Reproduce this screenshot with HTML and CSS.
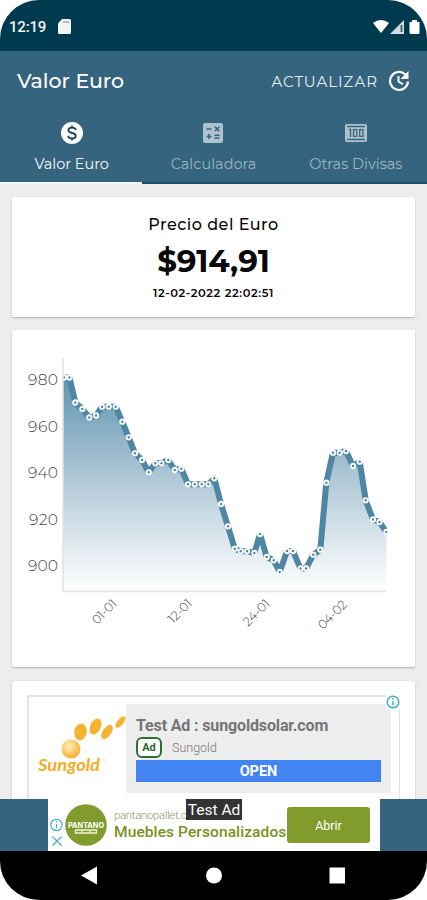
FILE: index.html
```html
<!DOCTYPE html>
<html lang="es">
<head>
    <meta charset="UTF-8">
    <meta name="viewport" content="width=device-width, initial-scale=1.0">
    <title>Valor Euro</title>
    <link rel="stylesheet" href="styles.css">
</head>
<body>
    <div class="phone">
        <!-- Barra de estado -->
        <div class="status-bar">
            <span class="clock">12:19</span>
            <svg class="sd-icon" width="13" height="15" viewBox="0 0 13 15"><path fill="#f3f4f6" d="M4 0h7.500q1.500 0 1.500 1.500v12q0 1.500-1.500 1.500h-10Q0 15 0 13.500V4.500z"/><path stroke="#6f8794" d="M5 3h6"/></svg>
            <svg class="signal-icons" width="48" height="16" viewBox="0 0 48 16">
                <path fill="#fff" d="M0 4Q8-2 16 4L8 14z"/>
                <path fill="#d5dce1" d="M17 15L31 1v14z"/>
                <path stroke="#51656f" stroke-width="2" d="M28.500 6v7"/>
                <path fill="#fff" d="M39 1h5v2h2.500v10.500q0 1.500-1.500 1.500h-7q-1.500 0-1.500-1.500V3H39z"/>
            </svg>
        </div>

        <header>
            <div class="toolbar">
                <h1>Valor Euro</h1>
                <a href="#" class="refresh">ACTUALIZAR</a>
                <svg width="22" height="22" viewBox="0 0 22 22" fill="none" stroke="#fff" stroke-width="2.200"><path d="M17.300 4.500A9 9 0 1 0 20 11.500"/><path d="M10.500 6v5.500l4.500 2.700" stroke-width="1.900"/><path fill="#fff" stroke="none" d="M20.500 1v8h-8z"/></svg>
            </div>
            <nav>
                <a href="#" class="tab active">
                    <svg width="22" height="22" viewBox="0 0 22 22"><circle cx="11" cy="11" r="11" fill="#fff"/><path fill="none" stroke="#20465e" stroke-width="1.800" d="M14.800 8Q14.500 5.700 11 5.700T7.400 8.300Q7.400 10.300 11 11t3.800 2.900q0 2.500-3.800 2.500T7.200 13.800M11 3.500v2.500M11 16v2.500"/></svg>
                    <span>Valor Euro</span>
                </a>
                <a href="#" class="tab">
                    <svg width="20" height="22" viewBox="0 -1 20 22"><rect width="20" height="20" rx="2" fill="#aec2ce"/><path fill="none" stroke="#35647e" stroke-width="1.600" d="M3.500 6h5M11.800 3.700l4.500 4.500M16.300 3.700l-4.500 4.500M3.500 13.500h5M6 11v5M11.500 12.300h5M11.500 15h5"/></svg>
                    <span>Calculadora</span>
                </a>
                <a href="#" class="tab">
                    <svg width="22" height="22" viewBox="0 -2 22 22"><rect width="22" height="18" rx="2" fill="#aec2ce"/><path fill="none" stroke="#35647e" stroke-width="1.300" d="M2 2.500h18M2 15.500h18M4 5.500h1.500V13M8.500 5.700h3.300v6.600H8.500zM14.700 5.700H18v6.600h-3.300z"/></svg>
                    <span>Otras Divisas</span>
                </a>
            </nav>
        </header>

        <main>
            <!-- Precio actual -->
            <section class="card price">
                <h2>Precio del Euro</h2>
                <p class="amount">$914,91</p>
                <p class="date">12-02-2022 22:02:51</p>
            </section>

            <!-- Gráfico del último mes -->
            <section class="card chart">
                <svg width="403" height="337" viewBox="12 330 403 337">
                    <defs>
                        <linearGradient id="fill" x1="0" y1="377" x2="0" y2="591" gradientUnits="userSpaceOnUse">
                            <stop offset="0" stop-color="#5f93b1"/>
                            <stop offset="0.500" stop-color="#b3cbd8"/>
                            <stop offset="1" stop-color="#ffffff"/>
                        </linearGradient>
                        <marker id="dot" markerUnits="userSpaceOnUse" markerWidth="8" markerHeight="8" refX="4" refY="4">
                            <circle cx="4" cy="4" r="2.200" fill="#4f86a4" stroke="#fff" stroke-width="1.900"/>
                        </marker>
                        <clipPath id="plot"><rect x="63" y="358" width="324" height="234"/></clipPath>
                    </defs>
                    <g clip-path="url(#plot)">
                        <path fill="url(#fill)" d="M63 591V377.500L69.500 377.500 75.300 402.500 82.300 409 89.300 417.500 96 415.500 102 406.700 115.700 406.700 122.300 421.700 128.700 437.300 135 453.300 142 460 148.700 472.300 155.300 463.300 161.500 463.300 168.300 460 174.700 470 181.300 468.700 188 484.300 208.300 484.300 214.300 478.300 221 504 228 526.300 234.700 548.700 240.700 551.300 247 551.300 254.300 553 260 534 266.700 557 273.700 560.300 279.700 572 287 551 293 551 300.500 568.500 306 568.500 313.300 554.700 320.300 549.700 326.300 482.700 333 452.700 339.700 452.700 346 451 353 466 359.700 461.700 365.700 500.300 373 519.500 379.500 522 386.300 532V591z"/>
                        <polyline class="line" points="64,377.500 69.500,377.500 75.300,402.500 82.300,409 89.300,417.500 96,415.500 102,406.700 108.700,406.700 115.700,406.700 122.300,421.700 128.700,437.300 135,453.300 142,460 148.700,472.300 155.300,463.300 161.500,463.300 168.300,460 174.700,470 181.300,468.700 188,484.300 194.700,484.300 201.700,484.300 208.300,484.300 214.300,478.300 221,504 228,526.300 234.700,548.700 240.700,551.300 247,551.300 254.300,553 260,534 266.700,557 273.700,560.300 279.700,572 287,551 293,551 300.500,568.500 306,568.500 313.300,554.700 320.300,549.700 326.300,482.700 333,452.700 339.700,452.700 346,451 353,466 359.700,461.700 365.700,500.300 373,519.500 379.500,522 386.300,532"/>
                    </g>
                    <path class="axis" d="M63 358V591.500H386"/>
                    <g class="y-labels">
                        <text x="28" y="385" textLength="30">980</text>
                        <text x="28" y="432" textLength="30">960</text>
                        <text x="28" y="478" textLength="30">940</text>
                        <text x="29" y="525" textLength="29">920</text>
                        <text x="28" y="571" textLength="30">900</text>
                    </g>
                    <g class="x-labels">
                        <text transform="translate(97 625) rotate(-45)" textLength="29">01-01</text>
                        <text transform="translate(173 624) rotate(-45)" textLength="28">12-01</text>
                        <text transform="translate(248 627) rotate(-45)" textLength="32">24-01</text>
                        <text transform="translate(323 630) rotate(-45)" textLength="35">04-02</text>
                    </g>
                </svg>
            </section>

            <!-- Anuncio nativo -->
            <section class="card native-ad">
                <div class="ad-frame">
                    <svg class="sungold" width="97" height="112" viewBox="29 697 97 112">
                        <defs>
                            <radialGradient id="sun" cx="0.400" cy="0.350" r="0.650">
                                <stop offset="0" stop-color="#fff0ba"/>
                                <stop offset="1" stop-color="#f5af32"/>
                            </radialGradient>
                        </defs>
                        <g fill="#f6b332">
                            <ellipse cx="80.500" cy="732" rx="6.200" ry="8.500" transform="rotate(10 80.500 732)"/>
                            <ellipse cx="95.500" cy="726.500" rx="5.200" ry="8.500" transform="rotate(25 95.500 726.500)"/>
                            <ellipse cx="107" cy="732" rx="4.200" ry="8.200" transform="rotate(35 107 732)"/>
                            <ellipse cx="120.500" cy="722" rx="3" ry="7" transform="rotate(40 120.500 722)"/>
                        </g>
                        <circle cx="71" cy="749" r="9.500" fill="url(#sun)"/>
                        <text class="sungold-name" x="38" y="771" textLength="62" lengthAdjust="spacingAndGlyphs">Sungold</text>
                        <circle cx="104" cy="760" r="1" fill="none" stroke="#f6c66c" stroke-width="0.500"/>
                    </svg>
                    <div class="ad-body">
                        <h3>Test Ad : sungoldsolar.com</h3>
                        <p><span class="ad-tag">Ad</span>Sungold</p>
                        <button>OPEN</button>
                    </div>
                    <svg class="ad-info" width="14" height="14" viewBox="0 0 14 14" fill="none" stroke="#48afc6" stroke-width="1.500"><circle cx="7" cy="7" r="5.800"/><path d="M7 6v4.500M7 3v1.700"/></svg>
                </div>
            </section>
        </main>

        <!-- Banner inferior -->
        <div class="banner-bar">
            <div class="banner">
                <svg width="16" height="32" viewBox="0 0 16 32" fill="none" stroke="#4aa9cf" stroke-width="1.200"><circle cx="8.500" cy="7" r="5.700"/><path d="M8.500 6v4.500M8.500 3v1.600M4.500 18.500l9 9M13.500 18.500l-9 9"/></svg>
                <svg class="pantano" width="42" height="42" viewBox="0 0 42 42">
                    <circle cx="21" cy="21" r="20.800" fill="#829b2d"/>
                    <text x="3" y="23.500" textLength="36" lengthAdjust="spacingAndGlyphs">PANTANO</text>
                    <path fill="none" stroke="#eef2dd" stroke-width="1.300" d="M10.500 26h21v3h-21zM17 26v3M25 26v3"/>
                </svg>
                <div class="banner-text">
                    <span class="banner-url">pantanopallet.c</span>
                    <span class="banner-title">Muebles Personalizados</span>
                </div>
                <button>Abrir</button>
                <span class="test-label">Test Ad</span>
            </div>
        </div>

        <!-- Botones de navegación -->
        <footer>
            <svg width="427" height="49" viewBox="0 0 427 49" fill="#fff"><path d="M81 24.500L97 15.500v18z"/><circle cx="214" cy="24.500" r="8"/><rect x="329.500" y="16.500" width="15.500" height="16"/></svg>
        </footer>
    </div>
</body>
</html>
```
FILE: styles.css
```css
* {
    margin: 0;
    padding: 0;
    box-sizing: border-box;
}

body {
    background-color: #fff;
    font-family: Montserrat, Inter, sans-serif;
}

svg {
    display: block;
    flex-shrink: 0;
}

a {
    color: inherit;
    text-decoration: none;
}

.phone {
    width: 427px;
    height: 900px;
    display: flex;
    flex-direction: column;
    overflow: hidden;
    border-radius: 39px;
    background-color: #ededed;
}

.status-bar {
    height: 51px;
    flex-shrink: 0;
    display: flex;
    align-items: center;
    padding: 2px 5px 0 9px;
    background-color: #003a4f;
}

.clock {
    width: 49px;
    color: #f3f4f6;
    font: 500 15px Roboto, sans-serif;
    letter-spacing: -0.2px;
}

.signal-icons {
    margin-left: auto;
    margin-right: 1px;
}

header {
    height: 133px;
    flex-shrink: 0;
    background-color: #35647e;
    border-bottom: 2px solid #17516c;
    color: #fff;
}

.toolbar {
    height: 59px;
    display: flex;
    align-items: center;
    padding: 0 17px;
}

h1 {
    font-size: 20.5px;
    font-weight: 500;
}

.refresh {
    margin-left: auto;
    margin-right: 10px;
    padding-top: 1px;
    font-size: 15px;
    letter-spacing: 1px;
    color: #e6edf1;
}

nav {
    display: grid;
    grid-template-columns: repeat(3, 1fr);
    height: 74px;
}

.tab {
    display: flex;
    flex-direction: column;
    align-items: center;
    justify-content: space-between;
    padding: 12px 0 11px;
    font-size: 14.5px;
    line-height: 18px;
    white-space: nowrap;
    color: #9db5c3;
}

.tab.active {
    color: #f5f8fa;
    border-bottom: 2px solid #f5f5f5;
    padding: 12px 0 9px 1px;
}

main {
    height: 615px;
    flex-shrink: 0;
    padding: 13px 12px 0;
    overflow: hidden;
}

.card {
    background-color: #fff;
    border-radius: 2px;
    box-shadow: 0 1px 2px rgba(0,0,0,0.25);
    margin-bottom: 13px;
}

.price {
    height: 120px;
    padding-top: 17px;
    text-align: center;
    color: #080808;
}

.price h2 {
    font-size: 16px;
    line-height: 22px;
    font-weight: 500;
    letter-spacing: 0.5px;
}

.amount {
    font-size: 31px;
    line-height: 36px;
    font-weight: 700;
    letter-spacing: -0.1px;
    margin-top: 7px;
}

.date {
    font-size: 11.5px;
    line-height: 16px;
    font-weight: 600;
    letter-spacing: 0.6px;
    margin-top: 6px;
}

.chart {
    height: 337px;
    margin-bottom: 14px;
}

.line {
    fill: none;
    stroke: #4f86a4;
    stroke-width: 6;
    stroke-linejoin: round;
    marker: url(#dot);
}

.axis {
    fill: none;
    stroke: #dfe3e5;
    stroke-width: 1.5;
}

.y-labels {
    font-size: 15.5px;
    font-weight: 300;
    fill: #444;
}

.x-labels {
    font-size: 12.5px;
    font-weight: 300;
    fill: #444;
}

/* Anuncios */
.native-ad {
    height: 140px;
    padding: 14px 15px 0;
}

.ad-frame {
    position: relative;
    display: flex;
    height: 126px;
    border: 2px solid #e3e3e3;
    border-right-width: 1px;
    font-family: Roboto, sans-serif;
}

.sungold-name {
    font: italic bold 17px Lato, sans-serif;
    fill: #efac26;
}

.ad-body {
    width: 265px;
    flex-shrink: 0;
    height: 89px;
    margin-top: 7px;
    padding: 12px 10px 0;
    background-color: #ededed;
}

.ad-body h3 {
    font-size: 16px;
    line-height: 20px;
    font-weight: 700;
    letter-spacing: -0.14px;
    white-space: nowrap;
    color: #757575;
}

.ad-body p {
    display: flex;
    align-items: center;
    gap: 10px;
    height: 24px;
    padding-bottom: 2px;
    font-size: 12.5px;
    font-weight: 300;
    color: #777;
}

.ad-tag {
    width: 26px;
    height: 21px;
    border: 2px solid #2c6f31;
    border-radius: 6px;
    background-color: #fff;
    color: #2d6332;
    font-size: 11px;
    font-weight: 700;
    line-height: 17px;
    text-align: center;
}

button {
    border: none;
    color: #fff;
    font-family: Roboto, sans-serif;
    cursor: pointer;
}

.ad-body button {
    display: block;
    width: 245px;
    height: 22px;
    font-size: 14.5px;
    font-weight: 700;
    background-color: #4384f3;
}

.ad-info {
    position: absolute;
    top: -2px;
    right: -1px;
    background-color: #fff;
}

.banner-bar {
    height: 52px;
    flex-shrink: 0;
    padding: 0 47px 0 48px;
    background-color: #35647e;
}

.banner {
    position: relative;
    display: flex;
    align-items: center;
    height: 52px;
    background-color: #fff;
    font-family: Roboto, sans-serif;
}

.banner > svg:first-child {
    margin-top: 17px;
}

.pantano {
    margin-left: 1px;
}

.pantano text {
    font: bold 8px Inter, sans-serif;
    fill: #fff;
}

.banner-text {
    width: 173px;
    margin-left: 7px;
    display: flex;
    flex-direction: column;
    white-space: nowrap;
}

.banner-url {
    font-size: 11.5px;
    line-height: 14px;
    font-weight: 300;
    letter-spacing: -0.35px;
    color: #8d9c6a;
}

.banner-title {
    font-size: 15.5px;
    line-height: 20px;
    font-weight: 500;
    letter-spacing: 0.1px;
    color: #75941b;
}

.banner button {
    width: 83px;
    height: 36px;
    border-radius: 3px;
    background-color: #829b2d;
    font-size: 12.5px;
}

.test-label {
    position: absolute;
    top: 0;
    left: 138px;
    width: 56px;
    height: 21px;
    background-color: #333;
    color: #fff;
    font-size: 15.5px;
    line-height: 22px;
    text-align: center;
    white-space: nowrap;
}

footer {
    height: 49px;
    flex-shrink: 0;
    background-color: #000;
}
```
